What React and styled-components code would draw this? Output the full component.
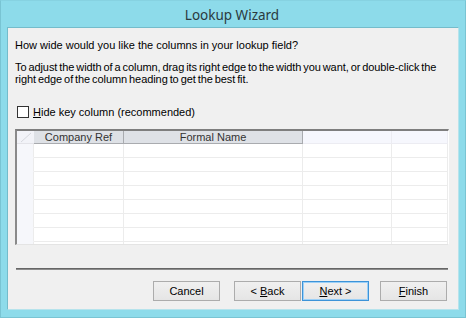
import React from "react";
import styled, { createGlobalStyle } from "styled-components";

const Global = createGlobalStyle`
  html, body { margin: 0; padding: 0; background: #8ddbea; }
  * { box-sizing: border-box; }
`;

const Frame = styled.div`
  width: 466px;
  height: 318px;
  background: #8ddbea;
  border: 1px solid #79c4d3;
  border-top-color: #86d2e1;
  display: flex;
  flex-direction: column;
  padding: 0 6px 7px 6px;
`;

const TitleBar = styled.div`
  height: 26px;
  display: flex;
  align-items: center;
  justify-content: center;
  font-family: "Noto Sans", "Open Sans", sans-serif;
  font-size: 13.5px;
  color: #2b3a3f;
  padding: 1px 2px 0 0;
`;

const Client = styled.div`
  flex: 1;
  background: #f0f0f0;
  border: 1px solid #74bccb;
  border-right-color: #b6e3ec;
  border-bottom-color: #b6e3ec;
  display: flex;
  flex-direction: column;
  padding: 11px 9px 0 7px;
  font-family: "Liberation Sans", Arial, sans-serif;
  font-size: 11px;
  color: #000;
`;

const Text = styled.p`
  margin: 0;
  line-height: 12px;
  white-space: nowrap;
  margin-top: ${(p) => p.$top || 0}px;
  word-spacing: ${(p) => (p.$tight ? "-1px" : "0")};
  letter-spacing: ${(p) => (p.$tight ? "-0.08px" : "0")};
`;

const CheckRow = styled.label`
  display: flex;
  align-items: center;
  gap: 4px;
  margin-top: 20px;
  margin-left: 2px;
  height: 13px;
`;

const Box = styled.span`
  width: 12px;
  height: 12px;
  border: 1px solid #333;
  background: #fff;
`;

const U = styled.span`
  text-decoration: underline;
`;

const Grid = styled.div`
  margin-top: 11px;
  height: 116px;
  border-top: 2px solid #7e7e7e;
  border-left: 2px solid #8a8a8a;
  border-right: 1px solid #ffffff;
  border-bottom: 1px solid #e4e4e4;
  background: #fff;
  overflow: hidden;
  display: grid;
  grid-template-columns: 17px 90px 179px 89px 1fr;
  grid-auto-rows: 14px;
  grid-template-rows: 13px;
`;

const Corner = styled.div`
  background: #f2f3f8;
  border-bottom: 1px solid #e3e3e8;
  position: relative;
`;

const Head = styled.div`
  background: ${(p) => (p.$empty ? "#f6f7fd" : "#dee1e6")};
  border-right: 1px solid ${(p) => (p.$empty ? "#ececf2" : "#a9abaf")};
  border-bottom: 1px solid ${(p) => (p.$empty ? "#ececf2" : "#a9abaf")};
  font-size: 11px;
  color: #333;
  display: flex;
  align-items: center;
  justify-content: center;
  line-height: 12px;
  white-space: nowrap;
  overflow: hidden;
`;

const Selector = styled.div`
  background: #f6f7fb;
  border-bottom: 1px solid #f6f7fb;
  border-right: 1px solid #ececec;
`;

const Cell = styled.div`
  border-right: 1px solid #ececec;
  border-bottom: 1px solid #ececec;
`;

const Separator = styled.div`
  margin-top: 23px;
  height: 2px;
  background: #666;
  border-bottom: 1px solid #8c8c8c;
  margin-right: 1px;
  margin-left: 1px;
`;

const Buttons = styled.div`
  display: flex;
  justify-content: flex-end;
  margin-top: 11px;
  padding-right: 2px;
`;

const Button = styled.button`
  width: 67px;
  height: 20px;
  margin-left: ${(p) => p.$gap || 0}px;
  font-family: "Liberation Sans", Arial, sans-serif;
  font-size: 11px;
  color: #000;
  border: 1px solid ${(p) => (p.$default ? "#3c93d8" : "#acacac")};
  background: linear-gradient(#f0f0f0, #e5e5e5);
  box-shadow: ${(p) => (p.$default ? "inset 0 0 0 1px #9cd0f7" : "none")};
  padding: 0;
  display: flex;
  align-items: center;
  justify-content: center;
`;

const columns = 5;
const rows = 8;

export default function App() {
  return (
    <>
      <Global />
      <Frame>
        <TitleBar>Lookup Wizard</TitleBar>
        <Client>
          <Text>How wide would you like the columns in your lookup field?</Text>
          <Text $top={10} $tight>
            To adjust the width of a column, drag its right edge to the width you want, or double-click the
            <br />
            right edge of the column heading to get the best fit.
          </Text>
          <CheckRow>
            <Box />
            <span>
              <U>H</U>ide key column (recommended)
            </span>
          </CheckRow>
          <Grid>
            <Corner>
              <svg width="17" height="12" viewBox="0 0 17 12" style={{ position: "absolute", left: 0, top: 0 }}>
                <path d="M4 11 L14 2" stroke="#d6d8de" strokeWidth="1" fill="none" />
              </svg>
            </Corner>
            <Head>Company Ref</Head>
            <Head>Formal Name</Head>
            <Head $empty />
            <Head $empty />
            {Array.from({ length: rows }).map((_, r) =>
              Array.from({ length: columns }).map((_, c) =>
                c === 0 ? <Selector key={`${r}-${c}`} /> : <Cell key={`${r}-${c}`} />
              )
            )}
          </Grid>
          <Separator />
          <Buttons>
            <Button>Cancel</Button>
            <Button $gap={14}>
              &lt;&nbsp;<U>B</U>ack
            </Button>
            <Button $default $gap={1}>
              <U>N</U>ext &gt;
            </Button>
            <Button $gap={11}>
              <U>F</U>inish
            </Button>
          </Buttons>
        </Client>
      </Frame>
    </>
  );
}
